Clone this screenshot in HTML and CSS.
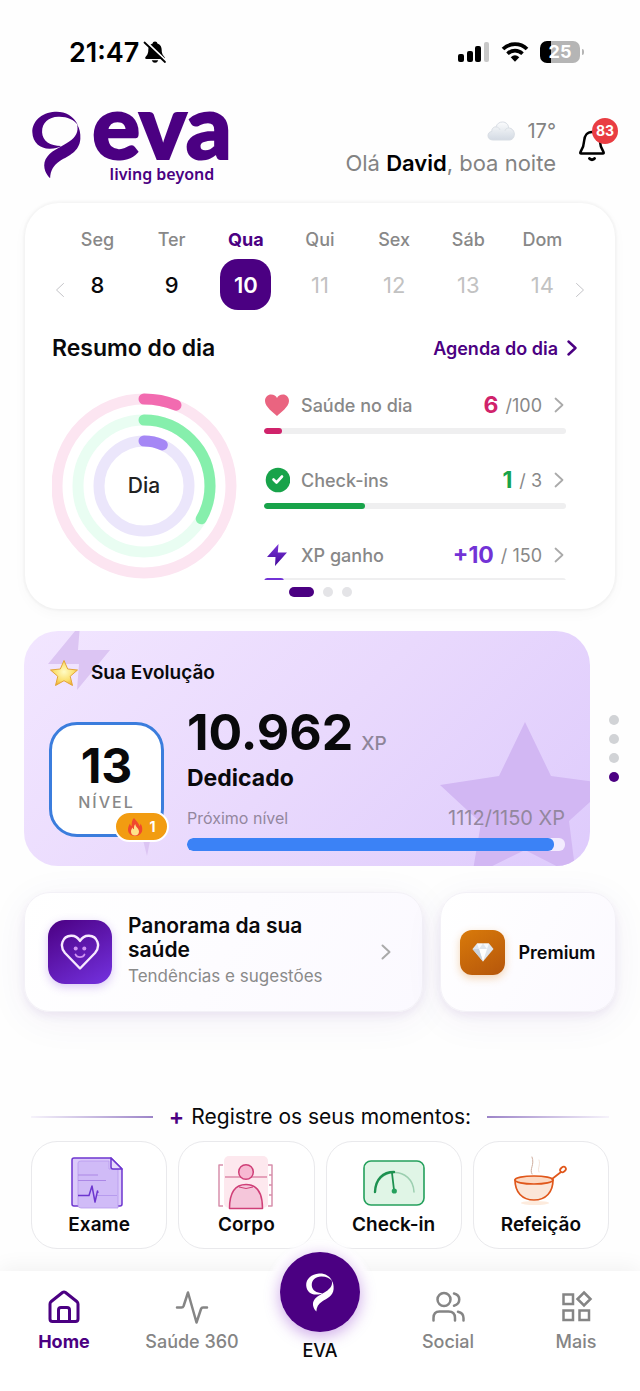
FILE: index.html
```html
<!DOCTYPE html>
<html lang="pt-BR">
<head>
    <meta charset="UTF-8">
    <meta name="viewport" content="width=device-width, initial-scale=1.0">
    <title>Eva - Living Beyond</title>
    <link rel="stylesheet" href="styles.css">
</head>
<body>
    <!-- Shared symbols -->
    <svg class="symbols" aria-hidden="true">
        <symbol id="eva-mark" viewBox="96 273 146 202">
            <path d="M233 315C220 286 192 273 164 275C124 278 96 304 97 336C98 368 122 386 150 385C164 385 174 382 183 377C150 377 127 362 126 336C125 308 146 291 174 290C200 289 220 298 233 315Z"/>
            <path d="M230 312C236 334 226 350 208 363C188 378 158 388 142 408C124 430 134 458 150 473C151 450 160 434 180 421C206 405 237 394 240 356C241 338 238 324 230 312Z"/>
        </symbol>
        <symbol id="chevron" viewBox="0 0 10 16">
            <path d="M1.5 1.5L8.5 8L1.5 14.5" fill="none" stroke="currentColor" stroke-linecap="round" stroke-linejoin="round"/>
        </symbol>
    </svg>

    <div class="status-bar">
        <div class="status-time">
            <span>21:47</span>
            <svg width="24" height="24" viewBox="0 0 24 24">
                <path d="M12 1.500C10.500 1.500 9.800 2.500 9.600 3.400C6.500 4.300 5.300 7 5.300 10C5.300 14 3.800 15.500 2.500 17C1.800 18 2.200 19 3.500 19H20.500C21.800 19 22.200 18 21.500 17C20.200 15.500 18.700 14 18.700 10C18.700 7 17.500 4.300 14.400 3.400C14.200 2.500 13.500 1.500 12 1.500Z"/>
                <path d="M8.800 20.300H15.200C14.600 22 13.500 22.800 12 22.800C10.500 22.800 9.400 22 8.800 20.300Z"/>
                <path d="M3.500 2L24 21.500" stroke="#fff" stroke-width="1.800"/>
                <path d="M1.500 2.500L22 22" stroke="#000" stroke-width="1.800" stroke-linecap="round"/>
            </svg>
        </div>
        <div class="status-icons">
            <svg width="32" height="20" viewBox="0 0 32 20">
                <rect x="0" y="12" width="6" height="8" rx="2"/>
                <rect x="9" y="9" width="6" height="11" rx="2"/>
                <rect x="17" y="4" width="6" height="16" rx="2"/>
                <rect x="26" y="0" width="5" height="20" rx="2" fill="#c8c8c8"/>
            </svg>
            <svg width="28" height="20" viewBox="0 0 28 20">
                <path d="M2 7A17.300 17.300 0 0 1 26 7" fill="none" stroke="#000" stroke-width="3.800"/>
                <path d="M6.500 11.700A10.800 10.800 0 0 1 21.500 11.700" fill="none" stroke="#000" stroke-width="3.600"/>
                <path d="M9.700 15.200Q14 11.500 18.300 15.200L14 19.700Z"/>
            </svg>
            <div class="battery">25</div>
        </div>
    </div>

    <header class="header">
        <div class="logo">
            <svg class="logo-mark" width="49" height="68"><use href="#eva-mark"/></svg>
            <div class="logo-text">
                <span class="logo-name">eva</span>
                <span class="logo-tagline">living beyond</span>
            </div>
        </div>
        <div class="greeting">
            <div class="weather">
                <svg width="28" height="20" viewBox="0 0 28 20">
                    <defs>
                        <linearGradient id="cloud" x1="0" y1="0" x2="0" y2="1">
                            <stop offset="0" stop-color="#fbfcfd"/>
                            <stop offset="1" stop-color="#d3dae3"/>
                        </linearGradient>
                    </defs>
                    <path d="M6 19C2.500 19 1 17 1 14.500C1 12 3 10.500 4.800 10.500C4.500 7.500 7 5.500 9 6C10 2.500 12.500 1 15.500 1C19 1 21.500 3.500 21.700 7C25 7 27.300 10 27.300 13C27.300 17 25 19 22 19Z" fill="url(#cloud)" stroke="#d8dde4" stroke-width="1"/>
                    <path d="M9 6C11 6 12.500 7 13 9M21.700 7C19.500 7 18 8.500 18 10" fill="none" stroke="#dde2e8"/>
                </svg>
                <span>17°</span>
            </div>
            <p>Olá <strong>David</strong>, boa noite</p>
        </div>
        <button class="bell" type="button" aria-label="Notificações">
            <svg width="28" height="32" viewBox="0 0 28 32" fill="none" stroke="#000" stroke-width="2.500" stroke-linejoin="round" stroke-linecap="round">
                <path d="M14 2C9 2 6.500 6 6.200 10.500C6 16 5 18 2.500 22C2 23 2.300 23.500 3.200 23.500H24.800C25.700 23.500 26 23 25.500 22C23 18 22 16 21.800 10.500C21.500 6 19 2 14 2Z"/>
                <path d="M11.500 28.500C12.500 30 15.500 30 16.500 28.500" stroke-width="3"/>
            </svg>
            <span class="bell-badge">83</span>
        </button>
    </header>

    <main>
        <section class="card summary">
            <div class="week">
                <button class="week-arrow" type="button" aria-label="Semana anterior"><svg class="flip" width="10" height="16"><use href="#chevron"/></svg></button>
                <ol class="days">
                    <li><span>Seg</span><button type="button">8</button></li>
                    <li><span>Ter</span><button type="button">9</button></li>
                    <li class="active"><span>Qua</span><button type="button">10</button></li>
                    <li class="future"><span>Qui</span><button type="button">11</button></li>
                    <li class="future"><span>Sex</span><button type="button">12</button></li>
                    <li class="future"><span>Sáb</span><button type="button">13</button></li>
                    <li class="future"><span>Dom</span><button type="button">14</button></li>
                </ol>
                <button class="week-arrow" type="button" aria-label="Próxima semana"><svg width="10" height="16"><use href="#chevron"/></svg></button>
            </div>

            <div class="summary-head">
                <h2>Resumo do dia</h2>
                <a href="#agenda">Agenda do dia <svg width="10" height="16"><use href="#chevron"/></svg></a>
            </div>

            <div class="slide">
                <svg class="rings" width="186" height="186" viewBox="0 0 186 186" fill="none" stroke-width="11" stroke-linecap="round">
                    <circle cx="93" cy="93" r="87" stroke="#fce5f1"/>
                    <circle cx="93" cy="93" r="66" stroke="#e9fdf2"/>
                    <circle cx="93" cy="93" r="45" stroke="#ebe6fb"/>
                    <g transform="rotate(-90 93 93)">
                        <circle cx="93" cy="93" r="87" stroke="#f26bb0" pathLength="100" stroke-dasharray="6 100"/>
                        <circle cx="93" cy="93" r="66" stroke="#86efac" pathLength="100" stroke-dasharray="33.300 100"/>
                        <circle cx="93" cy="93" r="45" stroke="#a587f5" pathLength="100" stroke-dasharray="6.700 100"/>
                    </g>
                    <text x="93" y="100" text-anchor="middle">Dia</text>
                </svg>

                <ul class="metrics">
                    <li class="health">
                        <a href="#saude">
                            <svg width="26" height="26" viewBox="0 0 26 26"><path d="M13 24C10 21 1 15 1 9C1 5 4 2.500 7 2.500C10 2.500 12 4 13 6C14 4 16 2.500 19 2.500C22 2.500 25 5 25 9C25 15 16 21 13 24Z" fill="#ea6480"/></svg>
                            <span class="label">Saúde no dia</span>
                            <strong>6</strong><span class="total">/100</span>
                            <svg class="go" width="10" height="16"><use href="#chevron"/></svg>
                        </a>
                        <div class="bar"><div class="fill" style="width: 6%"></div></div>
                    </li>
                    <li class="checkins">
                        <a href="#checkins">
                            <svg width="26" height="26" viewBox="0 0 26 26"><circle cx="14" cy="13" r="12.300" fill="#18a34a"/><path d="M9.500 12.500L12.500 15.500L18 9.500" fill="none" stroke="#fff" stroke-width="2.600" stroke-linecap="round" stroke-linejoin="round"/></svg>
                            <span class="label">Check-ins</span>
                            <strong>1</strong><span class="total">/ 3</span>
                            <svg class="go" width="10" height="16"><use href="#chevron"/></svg>
                        </a>
                        <div class="bar"><div class="fill" style="width: 33.300%"></div></div>
                    </li>
                    <li class="xp">
                        <a href="#xp">
                            <svg width="26" height="26" viewBox="0 0 26 26">
                                <defs>
                                    <linearGradient id="bolt" x1="0" y1="0" x2="0" y2="1">
                                        <stop offset="0" stop-color="#7a35d8"/>
                                        <stop offset="1" stop-color="#43089a"/>
                                    </linearGradient>
                                </defs>
                                <path d="M14.500 2L3 15H11.500L11 24L23 10.500H13.800Z" fill="url(#bolt)"/>
                            </svg>
                            <span class="label">XP ganho</span>
                            <strong>+10</strong><span class="total">/ 150</span>
                            <svg class="go" width="10" height="16"><use href="#chevron"/></svg>
                        </a>
                        <div class="bar"><div class="fill" style="width: 6.700%"></div></div>
                    </li>
                </ul>
            </div>

            <div class="pager"><span class="current"></span><span></span><span></span></div>
        </section>

        <div class="evolution-row">
            <section class="evolution">
                <svg class="decor-bolt" width="140" height="235" viewBox="0 0 140 235">
                    <path d="M56 -6L24 33L55 33L53 59L86 19L54 19ZM118 205L127 205L123 225Z"/>
                </svg>
                <svg class="decor-star" width="180" height="150" viewBox="0 0 180 150">
                    <path d="M115 6L141 60L200 68L159 105L166 160L115 134L62 160L71 107L30 69L89 60Z"/>
                </svg>

                <h2>
                    <svg width="30" height="28" viewBox="0 0 30 28">
                        <defs>
                            <radialGradient id="star" cx=".5" cy=".45" r=".6">
                                <stop offset="0" stop-color="#fffbc4"/>
                                <stop offset=".6" stop-color="#fbe070"/>
                                <stop offset="1" stop-color="#eda928"/>
                            </radialGradient>
                        </defs>
                        <path d="M15 1.500L18.700 10L28.500 11L21.200 17.300L23.500 26.500L15 21.700L6.500 26.500L8.800 17.300L1.500 11L11.300 10Z" fill="url(#star)" stroke="#e3a43a" stroke-linejoin="round"/>
                    </svg>
                    Sua Evolução
                </h2>

                <div class="evolution-body">
                    <div class="level">
                        <strong>13</strong>
                        <span>NÍVEL</span>
                        <div class="streak">
                            <svg width="16" height="20" viewBox="0 0 16 20">
                                <path d="M7 1C9 4 12 6 12.500 9C13.200 8.500 13.500 7.500 13.500 6.500C15 9 15.500 11 15.200 13.500C14.700 17 11.500 19 8 19C4 19 1 16.500 1 12.500C1 10 2 8 3 6.500C3.300 8 3.800 8.700 4.700 9C4.500 5.500 5 3 7 1Z" fill="#f0492e"/>
                                <path d="M8.200 7C8.500 10 12 11.500 12 14.500C12 17 10.300 18.500 8 18.500C5.500 18.500 4 17 4 14.500C4 12.500 5 11.500 5.500 10.500C6 11.500 6.300 12 7 12.200C7 10 7 8.500 8.200 7Z" fill="#fee38a"/>
                            </svg>
                            1
                        </div>
                    </div>
                    <div class="progress">
                        <p class="points">10.962 <small>XP</small></p>
                        <p class="rank">Dedicado</p>
                        <p class="next"><span>Próximo nível</span> <span class="next-xp">1112/1150 XP</span></p>
                        <div class="bar"><div class="fill" style="width: 97%"></div></div>
                    </div>
                </div>
            </section>
            <div class="side-dots"><span></span><span></span><span></span><span class="current"></span></div>
        </div>

        <div class="shortcuts">
            <a class="shortcut panorama" href="#panorama">
                <span class="shortcut-icon">
                    <svg width="40" height="36" viewBox="0 0 40 36" fill="none" stroke="#f7e9ff" stroke-width="2.400" stroke-linejoin="round" stroke-linecap="round">
                        <path d="M20 34.500L5 19C-1 12 2.500 2 11 1.700C15 1.500 18 3.500 20 7C22 3.500 25 1.500 29 1.700C37.500 2 41 12 35 19Z"/>
                        <path d="M15.500 20.500C17 24 23 24 24.500 20.500" stroke="#cf93f2" stroke-width="1.800"/>
                        <circle cx="15.700" cy="14.500" r="2" fill="#cf93f2" stroke="none"/>
                        <circle cx="24.300" cy="14.500" r="2" fill="#cf93f2" stroke="none"/>
                    </svg>
                </span>
                <span class="shortcut-text">
                    <strong>Panorama da sua saúde</strong>
                    <span>Tendências e sugestões</span>
                </span>
                <svg class="go" width="10" height="16"><use href="#chevron"/></svg>
            </a>
            <a class="shortcut premium" href="#premium">
                <span class="shortcut-icon">
                    <svg width="22" height="19" viewBox="0 0 22 19">
                        <path d="M5 0.500H17L21.500 6L11 18.500L0.500 6Z" fill="#dfe5ec"/>
                        <path d="M5 0.500L7 6L11 0.500L15 6L17 0.500Z" fill="#f8fafc"/>
                        <path d="M7 6H15L11 18.500Z" fill="#fff"/>
                        <path d="M0.500 6H7L11 18.500Z" fill="#c9d3de"/>
                    </svg>
                </span>
                <strong>Premium</strong>
            </a>
        </div>

        <section class="moments">
            <h2><span class="plus">+</span> Registre os seus momentos:</h2>
            <div class="tiles">
                <button type="button">
                    <svg width="56" height="56" viewBox="0 0 56 56" fill="none" stroke="#6d36cf" stroke-width="1.500" stroke-linejoin="round">
                        <path d="M3 3H40L51 14V49Q51 51 49 51H3Q1 51 1 49V5Q1 3 3 3Z" fill="#dccbfa"/>
                        <path d="M10 6H38V14H47V53H10Q7 53 7 50V8Q7 6 10 6Z" fill="#d0bbf7" stroke="#b79bee" stroke-width=".8"/>
                        <path d="M40 3V12Q40 14 42 14H51Z" fill="#e6dafc"/>
                        <path d="M7 20H27M7 25.500H35" stroke="#ab87e6" stroke-width="1.200"/>
                        <path d="M25 40.500H46" stroke="#b79bee" stroke-width="1"/>
                        <path d="M7 40.500H18L21 31L24 47L26.500 36L27 38"/>
                    </svg>
                    Exame
                </button>
                <button type="button">
                    <svg width="56" height="56" viewBox="0 0 56 56" fill="none" stroke="#cf3f77" stroke-width="1.500" stroke-linejoin="round">
                        <rect x="6" y="1" width="44" height="52" rx="5" fill="#fde8ee" stroke="none"/>
                        <path d="M5 10H1V51H5M50 10H54V51H50M51 20H54M51 30H54M51 40H54" stroke="#d790ac"/>
                        <path d="M7 22H49" stroke="#dd8aa8"/>
                        <circle cx="28" cy="17" r="7.300" fill="#f7b9d2"/>
                        <path d="M11.500 53.500C11.500 39 16 29.500 28 29.500C40 29.500 44.500 39 44.500 53.500Z" fill="#f5c6da"/>
                        <path d="M21 32Q28 35 35 32" stroke-width="1"/>
                    </svg>
                    Corpo
                </button>
                <button type="button">
                    <svg width="62" height="56" viewBox="0 0 62 56" fill="none" stroke="#24a05c" stroke-linecap="round">
                        <rect x="1" y="6" width="60" height="44" rx="7" fill="#e0f5e6" stroke-width="1.600"/>
                        <path d="M12 37C13 11 50 11 51 37" stroke="#9ccfb0" stroke-width="1.500"/>
                        <path d="M12 37C12.500 24 20 17 31 17" stroke="#1d9150" stroke-width="2.400"/>
                        <path d="M29 18L31 35" stroke="#1d9150" stroke-width="1.800"/>
                        <circle cx="31.300" cy="36" r="2.600" fill="#24a05c" stroke="none"/>
                    </svg>
                    Check-in
                </button>
                <button type="button">
                    <svg width="56" height="56" viewBox="0 0 56 56" fill="none" stroke="#e0571b" stroke-width="1.700" stroke-linecap="round">
                        <ellipse cx="22" cy="48" rx="14" ry="2" fill="#fdebdd" stroke="none"/>
                        <path d="M2 25C2 37 9 45 21 45C33 45 40 37 40 25Z" fill="#fbe6d8"/>
                        <ellipse cx="21" cy="25" rx="19" ry="4" fill="#fcd9c3"/>
                        <path d="M39 24L48 17"/>
                        <ellipse cx="50" cy="14.500" rx="3.200" ry="2.300" transform="rotate(-40 50 14.500)"/>
                        <path d="M19 19C16 14 22 10 19 2" stroke="#cfae9f" stroke-width="1"/>
                        <path d="M26 17C24 13 28 10 26 5" stroke="#f4e4da" stroke-width="1"/>
                    </svg>
                    Refeição
                </button>
            </div>
        </section>
    </main>

    <nav class="nav">
        <a class="active" href="#home">
            <svg width="36" height="36" viewBox="0 0 36 36" fill="none" stroke="currentColor" stroke-width="3" stroke-linejoin="round">
                <path d="M4 15Q4 13.500 5.200 12.500L16.500 3.500Q18 2.400 19.500 3.500L30.800 12.500Q32 13.500 32 15V30Q32 32.500 29.500 32.500H6.500Q4 32.500 4 30Z"/>
                <path d="M12.500 32V21Q12.500 18.500 15 18.500H21Q23.500 18.500 23.500 21V32"/>
            </svg>
            Home
        </a>
        <a href="#saude360">
            <svg width="36" height="36" viewBox="0 0 36 36" fill="none" stroke="currentColor" stroke-width="2.500" stroke-linejoin="round" stroke-linecap="round">
                <path d="M3 18.500H7.500Q9 18.500 9.600 17L14 3.500L22.500 33.500L27 20Q27.500 18.500 29 18.500H33"/>
            </svg>
            Saúde 360
        </a>
        <a class="eva" href="#eva">
            <span class="eva-button"><svg width="28" height="39"><use href="#eva-mark"/></svg></span>
            EVA
        </a>
        <a href="#social">
            <svg width="36" height="36" viewBox="0 0 36 36" fill="none" stroke="currentColor" stroke-width="2.500" stroke-linecap="round">
                <circle cx="14" cy="10.500" r="6.500"/>
                <path d="M3.500 31.500V29C3.500 24.500 6 22.500 9.500 22.500H18.500C22.500 22.500 25 24.500 25 29V31.500"/>
                <path d="M24 4.500C31 6 31 15 24 16.700M28 22.700C31.500 23.500 33.500 25.500 33.500 29V31.500"/>
            </svg>
            Social
        </a>
        <a href="#mais">
            <svg width="36" height="36" viewBox="0 0 36 36" fill="none" stroke="currentColor" stroke-width="2.500">
                <rect x="5.500" y="5.500" width="9.500" height="9.500"/>
                <rect x="5.500" y="21.500" width="9.500" height="9.500"/>
                <rect x="21.500" y="21.500" width="9.500" height="9.500"/>
                <path d="M26 3.500L32.500 10L26 16.500L19.500 10Z"/>
            </svg>
            Mais
        </a>
    </nav>
</body>
</html>
```
FILE: styles.css
```css
* {
    box-sizing: border-box;
}

body {
    margin: 0;
    font-family: Inter, "Liberation Sans", sans-serif;
    background-color: #fefefe;
    color: #09090b;
}

h2, p, ol, ul {
    margin: 0;
    padding: 0;
    list-style: none;
}

a {
    color: inherit;
    text-decoration: none;
}

button {
    padding: 0;
    border: none;
    background: none;
    color: inherit;
    font: inherit;
    cursor: pointer;
}

svg {
    flex-shrink: 0;
}

.symbols {
    display: none;
}

.flip {
    transform: scaleX(-1);
}

/* Status bar */
.status-bar {
    display: flex;
    justify-content: space-between;
    align-items: center;
    height: 104px;
    padding: 0 60px 0 69px;
    color: #000;
}

.status-time {
    display: flex;
    align-items: center;
    gap: 4px;
    font-size: 27px;
    font-weight: 600;
}

.status-icons {
    display: flex;
    align-items: center;
    gap: 11px;
}

.battery {
    position: relative;
    width: 40px;
    border-radius: 7px;
    background: linear-gradient(90deg, #000 27%, #b5b5b5 27%);
    color: #fff;
    font-size: 18px;
    font-weight: 700;
    line-height: 22px;
    text-align: center;
}

.battery::after {
    content: "";
    position: absolute;
    top: 8px;
    right: -4px;
    width: 2px;
    height: 6px;
    border-radius: 0 2px 2px 0;
    background-color: #b5b5b5;
}

/* Header */
.header {
    display: flex;
    align-items: center;
    height: 99px;
    padding: 0 32px;
}

.logo {
    display: flex;
    align-items: center;
    gap: 11px;
    margin-right: auto;
    color: #4b0082;
    font-family: Lato, "Open Sans", sans-serif;
}

.logo-mark {
    margin-top: -18px;
    fill: #4b0082;
}

.logo-text {
    display: flex;
    flex-direction: column;
    align-items: center;
    margin-top: -40px;
}

.logo-name {
    font-size: 90px;
    font-weight: 900;
    line-height: 80px;
    -webkit-text-stroke: 2px #4b0082;
    stroke-linejoin: round;
}

.logo-tagline {
    font-family: "Noto Sans", sans-serif;
    font-size: 16px;
    font-weight: 600;
    line-height: 20px;
}

.greeting {
    display: flex;
    flex-direction: column;
    align-items: flex-end;
    gap: 4px;
    margin: 0 22px 14px 0;
    color: #838383;
    font-size: 22px;
    line-height: 28px;
}

.greeting strong {
    color: #000;
    font-weight: 600;
}

.weather {
    display: flex;
    align-items: center;
    gap: 12px;
    font-size: 20px;
}

.bell {
    position: relative;
    margin: 0 2px 16px 0;
    height: 32px;
}

.bell-badge {
    position: absolute;
    top: -12px;
    right: -12px;
    width: 26px;
    border-radius: 13px;
    background-color: #e93d42;
    color: #fff;
    font-size: 14px;
    font-weight: 700;
    line-height: 26px;
    text-align: center;
}

/* Day summary */
.card {
    margin: 0 25px;
    border-radius: 34px;
    background-color: #fff;
    box-shadow: 0 0 2px 2px rgba(0, 0, 0, .03), 0 4px 14px rgba(0, 0, 0, .03);
}

.summary {
    padding: 25px 27px 12px;
}

.week {
    display: flex;
    align-items: flex-end;
    gap: 4px;
}

.week-arrow {
    width: 16px;
    height: 36px;
    color: #c4c4c8;
}

.days {
    flex: 1;
    display: flex;
    justify-content: space-between;
}

.days li {
    display: flex;
    flex-direction: column;
    align-items: center;
    gap: 7px;
    width: 51px;
    color: #888;
    font-size: 18px;
    font-weight: 500;
    line-height: 24px;
}

.days button {
    width: 51px;
    height: 51px;
    border-radius: 18px;
    color: #09090b;
    font-size: 22px;
}

.days .future button {
    color: #c2c2c2;
    font-weight: 400;
}

.days .active {
    color: #4b0082;
    font-weight: 700;
}

.days .active button {
    background-color: #4b0082;
    color: #fff;
    font-weight: 600;
}

.summary-head {
    display: flex;
    justify-content: space-between;
    align-items: center;
    margin-top: 22px;
    padding-right: 11px;
}

.summary-head h2 {
    font-size: 23px;
    font-weight: 600;
    line-height: 32px;
}

.summary-head a {
    display: flex;
    align-items: center;
    gap: 9px;
    color: #4b0082;
    font-size: 18px;
    font-weight: 600;
    stroke-width: 2.4;
}

.slide {
    display: flex;
    gap: 27px;
    height: 187px;
    margin-top: 29px;
    overflow: hidden;
}

.rings {
    margin-left: -1px;
}

.rings text {
    fill: #222;
    stroke: none;
    font-size: 21px;
    font-weight: 500;
}

.metrics {
    flex: 1;
    margin-right: 22px;
}

.metrics li {
    height: 75px;
}

.metrics a {
    display: flex;
    align-items: center;
    height: 24px;
    color: #888;
    font-size: 18px;
    font-weight: 500;
}

.metrics .label {
    margin: 0 auto 0 11px;
}

.metrics strong {
    margin-right: 7px;
    font-size: 23px;
    font-weight: 700;
}

.metrics .total {
    font-weight: 400;
}

.go {
    margin: 0 2px 0 12px;
    color: #aaa;
    stroke-width: 1.8;
}

.bar {
    border-radius: 6px;
    overflow: hidden;
}

.fill {
    height: 100%;
    border-radius: 6px;
}

.metrics .bar {
    height: 6px;
    margin-top: 11px;
    background-color: #efeff0;
}

.health strong {
    color: #d0236b;
}

.health .fill {
    background-color: #d0236b;
}

.checkins strong {
    color: #18a34a;
}

.checkins .fill {
    background-color: #18a34a;
}

.xp strong {
    color: #7233d6;
}

.xp .fill {
    background-color: #7233d6;
}

.pager {
    display: flex;
    justify-content: center;
    gap: 9px;
    margin-top: 7px;
}

.pager span {
    width: 10px;
    height: 10px;
    border-radius: 5px;
    background-color: #e4e4e7;
}

.pager .current {
    width: 25px;
    background-color: #4b0082;
}

/* Evolution */
.evolution-row {
    display: flex;
    align-items: center;
    gap: 19px;
    margin: 22px 21px 0 24px;
}

.evolution {
    position: relative;
    flex: 1;
    height: 235px;
    padding: 26px 25px 0;
    border-radius: 34px;
    background: linear-gradient(135deg, #f2e6ff, #e9d9fd 50%, #decbfc);
    overflow: hidden;
}

.decor-bolt {
    position: absolute;
    top: 0;
    left: 0;
    fill: #dcc5f3;
}

.decor-star {
    position: absolute;
    right: 0;
    bottom: 0;
    fill: #d2b7f3;
}

.evolution h2 {
    position: relative;
    display: flex;
    align-items: center;
    gap: 12px;
    font-size: 19px;
    font-weight: 600;
    line-height: 32px;
}

.evolution-body {
    position: relative;
    display: flex;
    gap: 23px;
    margin-top: 17px;
}

.level {
    position: relative;
    display: flex;
    flex-direction: column;
    align-items: center;
    width: 115px;
    height: 115px;
    margin-top: 16px;
    padding-top: 17px;
    border: 3px solid #3b7ddd;
    border-radius: 28px;
    background-color: #fff;
    color: #888;
    font-size: 16px;
    font-weight: 500;
    letter-spacing: 2px;
    line-height: 24px;
}

.level strong {
    color: #09090b;
    font-size: 48px;
    font-weight: 700;
    letter-spacing: 0;
    line-height: 48px;
}

.streak {
    position: absolute;
    right: -8px;
    bottom: -8px;
    display: flex;
    align-items: center;
    justify-content: center;
    gap: 6px;
    width: 55px;
    height: 31px;
    border: 2px solid #fff;
    border-radius: 16px;
    background-color: #f29c11;
    color: #fff;
    font-size: 14px;
    font-weight: 700;
    letter-spacing: 0;
}

.progress {
    flex: 1;
}

.points {
    font-size: 50px;
    font-weight: 700;
    line-height: 52px;
}

.points small {
    margin-left: -4px;
    color: #8e8599;
    font-size: 19px;
    font-weight: 500;
    line-height: 20px;
}

.rank {
    margin-top: 4px;
    font-size: 23px;
    font-weight: 700;
    line-height: 32px;
}

.next {
    display: flex;
    justify-content: space-between;
    margin-top: 12px;
    color: #93879e;
    font-size: 16px;
    line-height: 24px;
}

.next-xp {
    font-size: 20px;
}

.progress .bar {
    height: 13px;
    margin-top: 8px;
    background-color: #f3ebfe;
}

.progress .fill {
    background-color: #3b82f6;
}

.side-dots {
    display: flex;
    flex-direction: column;
    gap: 9px;
}

.side-dots span {
    width: 10px;
    height: 10px;
    border-radius: 5px;
    background-color: #d1d3d6;
}

.side-dots .current {
    background-color: #4b0082;
}

/* Shortcuts */
.shortcuts {
    display: flex;
    gap: 17px;
    margin: 26px 24px 0;
}

.shortcut {
    display: flex;
    align-items: center;
    height: 120px;
    border: 1px solid #f3f1f7;
    border-radius: 26px;
    background: linear-gradient(120deg, #fff, #fbf9ff);
    box-shadow: 0 4px 10px rgba(75, 0, 130, .07), 0 8px 40px rgba(75, 0, 130, .06);
}

.panorama {
    flex: 1;
    padding: 0 31px 0 23px;
}

.shortcut-icon {
    display: flex;
    align-items: center;
    justify-content: center;
}

.panorama .shortcut-icon {
    width: 64px;
    height: 64px;
    border-radius: 17px;
    background: linear-gradient(150deg, #4b0082, #7432e0);
    box-shadow: 0 3px 10px rgba(109, 40, 217, .25);
}

.shortcut-text {
    flex: 1;
    margin-left: 16px;
    color: #8a8a8a;
    font-size: 17px;
    line-height: 28px;
}

.shortcut-text strong {
    display: block;
    max-width: 200px;
    color: #09090b;
    font-size: 21px;
    font-weight: 600;
    line-height: 24px;
}

.shortcut .go {
    margin: 0;
    stroke-width: 2;
}

.premium {
    width: 176px;
    justify-content: center;
    gap: 13px;
    font-size: 18px;
}

.premium strong {
    font-weight: 600;
}

.premium .shortcut-icon {
    width: 45px;
    height: 45px;
    border-radius: 12px;
    background: linear-gradient(150deg, #d97a0a, #b5560b);
    box-shadow: 0 3px 8px rgba(217, 119, 6, .3);
}

/* Moments */
.moments {
    margin: 89px 31px 0;
}

.moments h2 {
    display: flex;
    align-items: center;
    gap: 7px;
    font-size: 21px;
    font-weight: 400;
    line-height: 32px;
}

.moments h2::before,
.moments h2::after {
    content: "";
    flex: 1;
    height: 2px;
    margin-right: 9px;
    background: linear-gradient(90deg, #f6f3fb, #9c84c8);
}

.moments h2::after {
    margin: 0 0 0 9px;
    background: linear-gradient(90deg, #9c84c8, #f6f3fb);
}

.moments .plus {
    color: #4b0082;
    font-size: 23px;
    font-weight: 600;
}

.tiles {
    display: grid;
    grid-template-columns: repeat(4, 1fr);
    gap: 11px;
    margin-top: 8px;
}

.tiles button {
    display: flex;
    flex-direction: column;
    align-items: center;
    height: 108px;
    padding-top: 13px;
    border: 1px solid #e9e9ec;
    border-radius: 26px;
    background-color: #fff;
    font-size: 19px;
    font-weight: 600;
    line-height: 28px;
}

/* Bottom navigation */
.nav {
    display: grid;
    grid-template-columns: repeat(5, 1fr);
    height: 120px;
    margin-top: 22px;
    padding-top: 18px;
    background-color: #fff;
    box-shadow: 0 -4px 20px rgba(0, 0, 0, .05);
}

.nav a {
    display: flex;
    flex-direction: column;
    align-items: center;
    gap: 4px;
    color: #858585;
    font-size: 18px;
    font-weight: 500;
    line-height: 26px;
}

.nav .active {
    color: #4b0082;
    font-weight: 700;
}

.nav .eva {
    gap: 6px;
    margin-top: -37px;
    color: #09090b;
}

.eva-button {
    display: flex;
    align-items: center;
    justify-content: center;
    width: 80px;
    height: 80px;
    border-radius: 50%;
    background-color: #4b0082;
    fill: #fff;
    box-shadow: 0 4px 16px rgba(109, 0, 190, .35), 0 0 4px 12px #fff;
}
```
